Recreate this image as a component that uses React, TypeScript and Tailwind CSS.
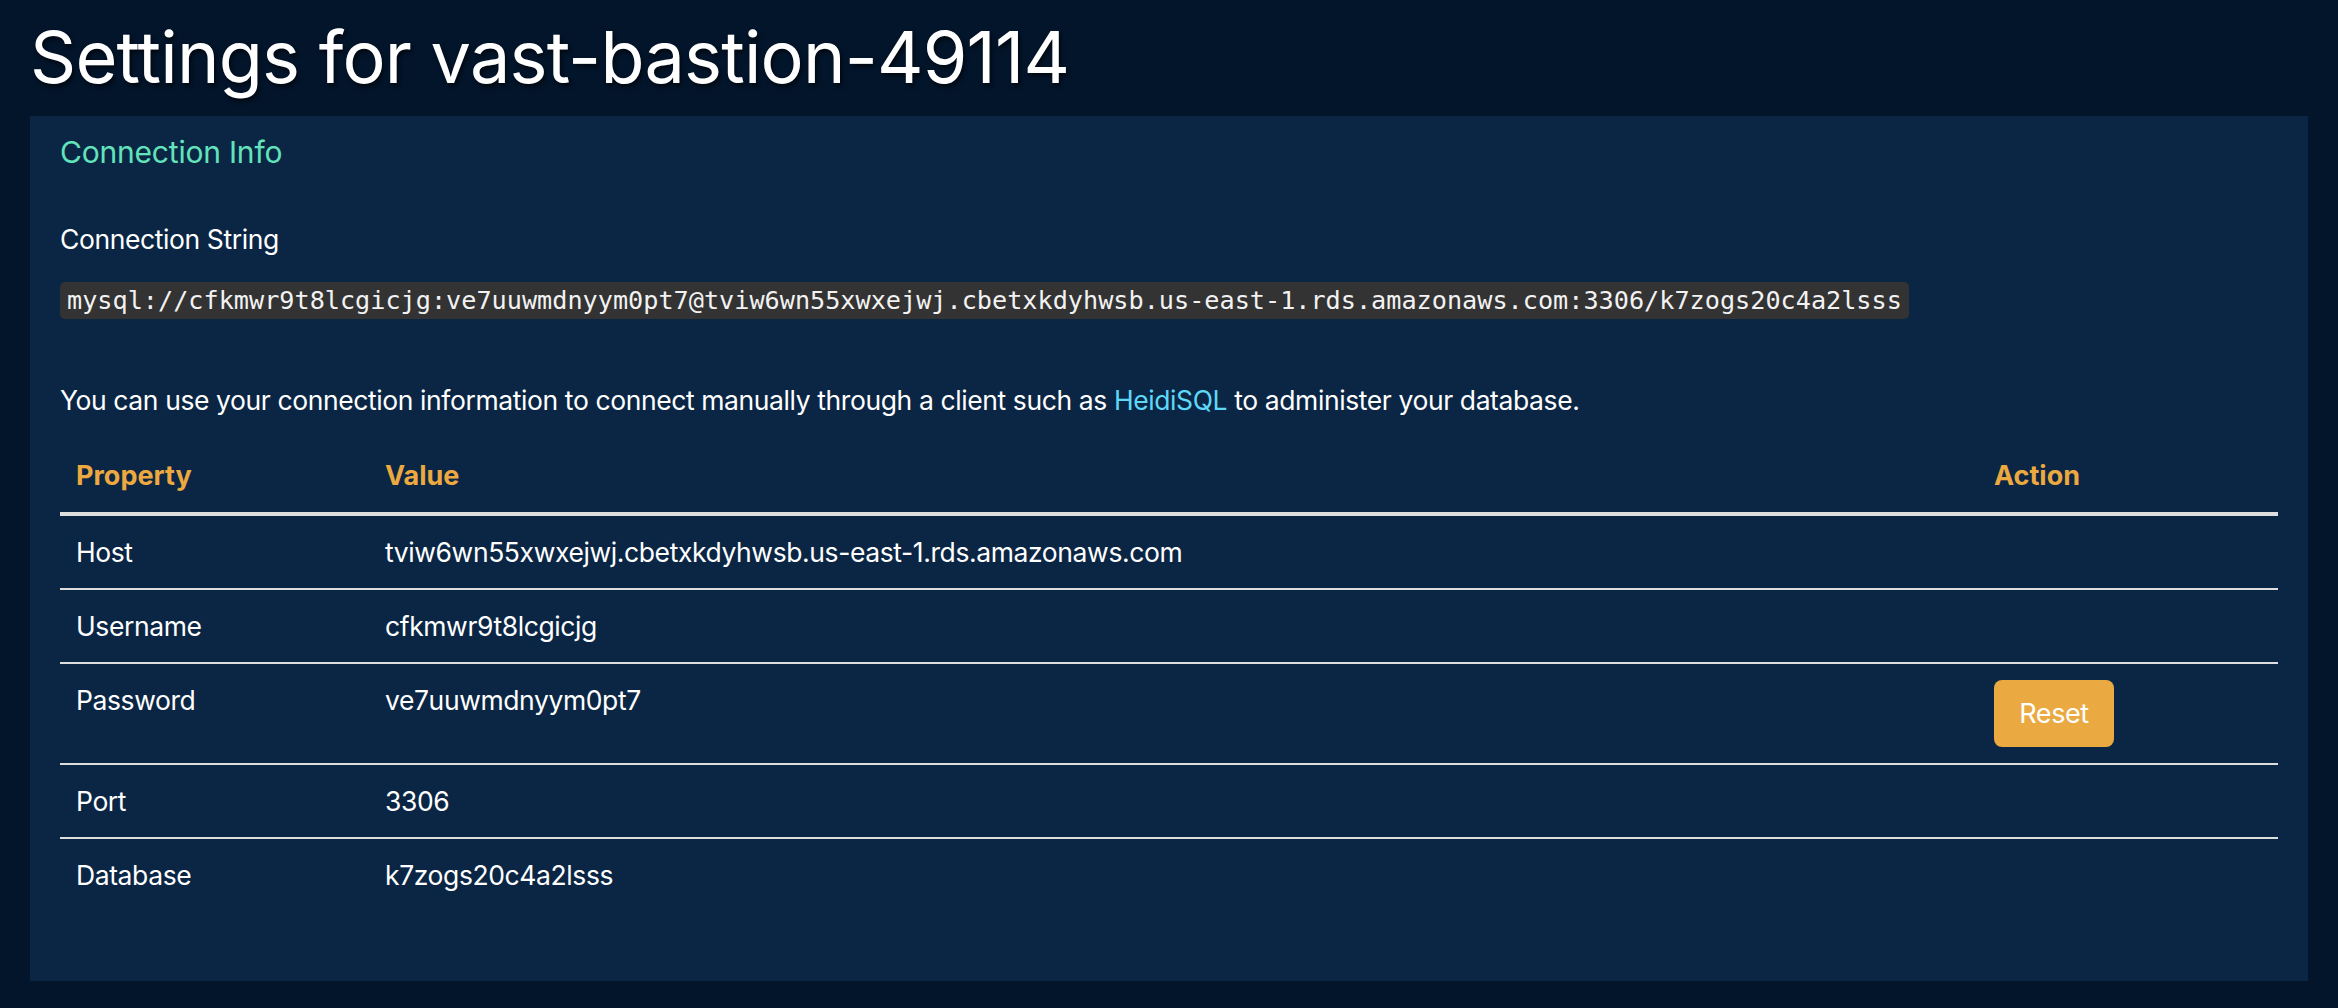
import React from 'react';

interface Row {
    property: string;
    value: string;
    action?: boolean;
}

const rows: Row[] = [
    { property: 'Host', value: 'tviw6wn55xwxejwj.cbetxkdyhwsb.us-east-1.rds.amazonaws.com' },
    { property: 'Username', value: 'cfkmwr9t8lcgicjg' },
    { property: 'Password', value: 've7uuwmdnyym0pt7', action: true },
    { property: 'Port', value: '3306' },
    { property: 'Database', value: 'k7zogs20c4a2lsss' },
];

const connectionString =
    'mysql://cfkmwr9t8lcgicjg:ve7uuwmdnyym0pt7@tviw6wn55xwxejwj.cbetxkdyhwsb.us-east-1.rds.amazonaws.com:3306/k7zogs20c4a2lsss';

const App: React.FC = () => {
    return (
        <div className="min-h-screen bg-[#03152b] font-['Inter',sans-serif] text-white">
            <h1 className="px-[30px] pt-[21px] pb-[23px] text-[72px] leading-none font-normal tracking-[-0.8px] [text-shadow:2px_3px_4px_rgba(0,0,0,0.6)]">
                Settings for vast-bastion-49114
            </h1>

            <section className="mx-[30px] bg-[#0a2644] px-[30px] pt-[12px] pb-[70px]">
                <h2 className="text-[30px] leading-[48px] tracking-[-0.2px] text-[#62e3bb]">Connection Info</h2>

                <p className="mt-[43px] text-[26.5px] leading-[40px] tracking-[-0.4px]">Connection String</p>
                <div className="mt-[23px]">
                    <code className="inline-block rounded-[5px] bg-[#333333] px-[7px] py-[3px] font-['DejaVu_Sans_Mono',monospace] text-[25.2px] leading-[31px] text-[#f2f2f2]">
                        {connectionString}
                    </code>
                </div>

                <p className="mt-[61px] text-[26.5px] leading-[40px] tracking-[-0.4px]">
                    You can use your connection information to connect manually through a client such as{' '}
                    <a href="#" className="text-[#5fd8f7]">HeidiSQL</a> to administer your database.
                </p>

                <table className="mt-[20px] w-full border-collapse text-[26.5px] leading-[40px] tracking-[-0.4px]">
                    <thead>
                        <tr className="border-b-4 border-[#dedede]">
                            <th className="w-[309px] px-[16px] py-[16px] text-left text-[27px] font-bold tracking-normal text-[#eca940]">Property</th>
                            <th className="px-[16px] py-[16px] text-left text-[27px] font-bold tracking-normal text-[#eca940]">Value</th>
                            <th className="w-[300px] px-[16px] py-[16px] text-left text-[27px] font-bold tracking-normal text-[#eca940]">Action</th>
                        </tr>
                    </thead>
                    <tbody>
                        {rows.map((row, i) => (
                            <tr key={row.property} className={i < rows.length - 1 ? 'border-b-2 border-[#dedede]' : ''}>
                                <td className="px-[16px] py-[16px] align-top">{row.property}</td>
                                <td className="px-[16px] py-[16px] align-top">{row.value}</td>
                                <td className="px-[16px] py-[16px] align-top">
                                    {row.action && (
                                        <button className="h-[67px] w-[120px] rounded-[8px] bg-[#eba942] text-[27px] tracking-[-0.4px] text-white">
                                            Reset
                                        </button>
                                    )}
                                </td>
                            </tr>
                        ))}
                    </tbody>
                </table>
            </section>
        </div>
    );
};

export default App;
